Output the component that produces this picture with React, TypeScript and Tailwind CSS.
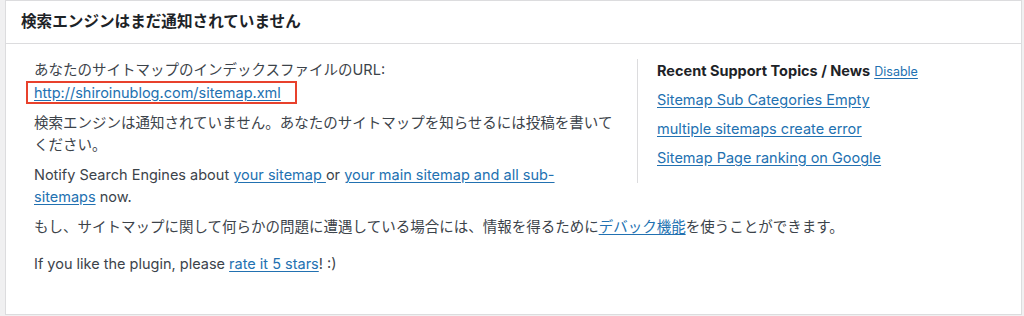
const font = { fontFamily: 'Inter, "Noto Sans CJK JP", sans-serif' };

function Link({ children, className = '' }: { children: React.ReactNode; className?: string }) {
  return (
    <a href="#" className={`text-[#2271b1] underline underline-offset-2 ${className}`}>
      {children}
    </a>
  );
}

const topics = [
  'Sitemap Sub Categories Empty',
  'multiple sitemaps create error',
  'Sitemap Page ranking on Google',
];

export default function App() {
  return (
    <div className="h-[316px] w-[1024px] bg-[#f0f0f1] pl-[5px] pr-[2px] pb-[1px]" style={font}>
      <div className="h-full border border-[#dcdcde] bg-white text-[14.5px] leading-[22px] text-[#3c434a]">
        <div className="flex h-[43px] items-center border-b border-[#dcdcde] px-[15px]">
          <h2 className="text-[15.6px] font-bold text-[#1d2327]">検索エンジンはまだ通知されていません</h2>
        </div>

        <div className="px-[28px] pt-[15px]">
          <div className="flex items-start">
            <div className="w-[579px] shrink-0">
              <p>
                あなたのサイトマップのインデックスファイルのURL:
                <br />
                <span className="-ml-[8px] inline-block border-2 border-[#e8412c] pl-[6px] pr-[14px] leading-[19px]">
                  <Link>http://shiroinublog.com/sitemap.xml</Link>
                </span>
              </p>
              <p className="mt-[8px]">
                検索エンジンは通知されていません。あなたのサイトマップを知らせるには投稿を書いてください。
              </p>
              <p className="mt-[8px]">
                Notify Search Engines about <Link>your sitemap </Link> or{' '}
                <Link>
                  your main sitemap and all sub-
                  <wbr />
                  sitemaps
                </Link>{' '}
                now.
              </p>
            </div>

            <div className="ml-[24px] h-[124px] border-l border-[#dcdcde] pl-[19px] pt-[1px]">
              <p>
                <span className="font-bold text-[#1d2327]">Recent Support Topics / News</span>{' '}
                <Link className="text-[12.5px]">Disable</Link>
              </p>
              <ul className="mt-[6px] flex flex-col gap-[7px]">
                {topics.map((t) => (
                  <li key={t}>
                    <Link>{t}</Link>
                  </li>
                ))}
              </ul>
            </div>
          </div>

          <p className="mt-[8px]">
            もし、サイトマップに関して何らかの問題に遭遇している場合には、情報を得るために<Link>デバック機能</Link>を使うことができます。
          </p>
          <p className="mt-[15px]">
            If you like the plugin, please <Link>rate it 5 stars</Link>! :)
          </p>
        </div>
      </div>
    </div>
  );
}
